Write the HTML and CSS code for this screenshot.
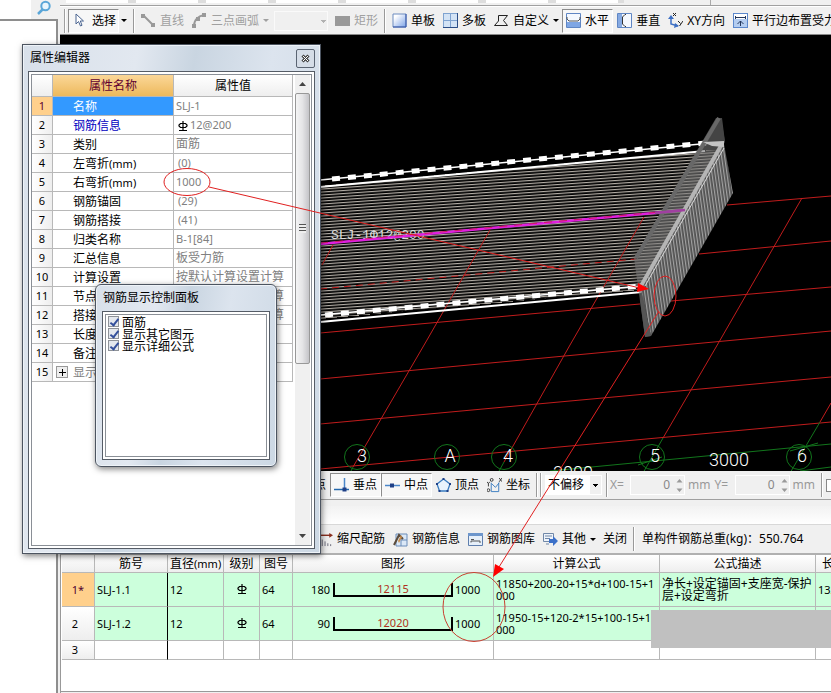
FILE: index.html
```
<!DOCTYPE html>
<html lang="zh-CN">
<head>
    <meta charset="UTF-8">
    <meta name="viewport" content="width=device-width, initial-scale=1.0">
    <title>钢筋编辑</title>
    <link rel="stylesheet" href="styles.css">
</head>
<body>
<!-- Shared symbols -->
<svg class="defs" width="0" height="0">
    <defs>
        <linearGradient id="blueFill" x1="0" y1="0" x2="1" y2="1">
            <stop offset="0.2" stop-color="#ffffff"/>
            <stop offset="1" stop-color="#7ba2e6"/>
        </linearGradient>
        <symbol id="rebar" viewBox="0 0 10 10">
            <path d="M5 0V10M1 9.5H9M2.5 2.5H7.5L9 4V5L7.5 6.500H2.500L1 5V4Z" fill="none" stroke="#000" stroke-width="1.2"/>
        </symbol>
    </defs>
</svg>

<div class="app">
    <aside class="side">
        <div class="side-search">
            <svg width="16" height="16" viewBox="0 0 16 16"><circle cx="9.500" cy="6" r="4.200" fill="#e8f5fd" stroke="#5aa6d8" stroke-width="2"/><path d="M6.500 9.500L2 14" stroke="#5aa6d8" stroke-width="2.500"/></svg>
        </div>
        <div class="side-body"></div>
    </aside>

    <main class="main">
        <div class="strip"><span class="strip-left"></span><span class="strip-right"></span></div>

        <!-- Draw toolbar -->
        <div class="toolbar draw-bar">
            <span class="handle"></span>
            <button class="tool pressed select-tool"><svg width="15" height="15" viewBox="0 0 15 15"><path d="M4 1V11L6.500 8.500L8.500 13L10 12.300L8.300 8H11.500Z" fill="#fff" stroke="#4a6490"/></svg>选择</button>
            <button class="drop" aria-label="选择方式"></button>
            <span class="sep"></span>
            <button class="tool" disabled><svg width="15" height="15" viewBox="0 0 15 15"><path d="M2 2L12 12" stroke="#999" stroke-width="2"/><path d="M0 1H4V5H0ZM10 10H14V14H10Z" fill="#999"/></svg>直线</button>
            <button class="tool" disabled><svg width="15" height="15" viewBox="0 0 15 15"><path d="M2 13C2 7 6 3 12 2" fill="none" stroke="#999" stroke-width="2"/><path d="M0 11H4V15H0ZM10 0H14V4H10ZM4 4H8V8H4Z" fill="#999"/></svg>三点画弧<i class="caret"></i></button>
            <select class="mode-select" aria-label="弧线方式" disabled><option></option></select>
            <button class="tool" disabled><svg width="15" height="15" viewBox="0 0 15 15"><path d="M0 3H15V13H0Z" fill="#999"/></svg>矩形</button>
            <span class="sep"></span>
            <button class="tool"><svg width="15" height="15" viewBox="0 0 15 15"><path d="M1 1H14V14H1Z" fill="url(#blueFill)" stroke="#6c8cc0"/><path d="M14 1V14H1" fill="none" stroke="#3454a8"/></svg>单板</button>
            <button class="tool"><svg width="15" height="15" viewBox="0 0 15 15"><path d="M0 0H15V15H0Z" fill="#7fa3d0"/><path d="M1 1H7V7H1ZM8 1H14V7H8ZM1 8H7V14H1ZM8 8H14V14H8Z" fill="#d3e3f5"/><path d="M14.500 0V14.500H0" fill="none" stroke="#2b4d86"/></svg>多板</button>
            <button class="tool"><svg width="15" height="15" viewBox="0 0 15 15"><path d="M4.500 2.500H13.500L9.500 7.500L13.500 12.500H.5L4.500 8Z" fill="none" stroke="#222"/></svg>自定义<i class="caret"></i></button>
            <button class="tool pressed"><svg width="15" height="15" viewBox="0 0 15 15"><path d="M.5.5H14.500V14.500H.5Z" fill="#f4f8fe" stroke="#5f86c4"/><path d="M1 9H14V14H1Z" fill="#7fa6e4"/><path d="M1 4V6L3 8H12L14 6V4" fill="none" stroke="#555"/></svg>水平</button>
            <button class="tool"><svg width="15" height="15" viewBox="0 0 15 15"><path d="M.5.5H14.500V14.500H.5Z" fill="#f4f8fe" stroke="#5f86c4"/><path d="M1 1H5V14H1Z" fill="#86aae2"/><path d="M9 1.500H8L5.500 4V11L8 13.500H9" fill="none" stroke="#333"/></svg>垂直</button>
            <button class="tool"><svg width="15" height="15" viewBox="0 0 15 15"><path d="M3 4L3 11L10 13" fill="none" stroke="#3c6fc4" stroke-width="1.500"/><path d="M0 6L3 2L6 6ZM7 10L11 13L6 15Z" fill="#3c6fc4"/><path d="M5 0L8 3M8 0L5 3M10 8L12.500 10.500M15 8L11.500 13" stroke="#222"/></svg>XY方向</button>
            <button class="tool"><svg width="15" height="15" viewBox="0 0 15 15"><path d="M0 0H15V15H0Z" fill="#5c88cc"/><path d="M1 1H14V6H1Z" fill="#fff"/><path d="M1 6H14V14H1Z" fill="#b4cdf0"/><path d="M2 4.500H13M2.500 3V6M12.500 3V6M7.500 13V8M4.500 11L7.500 8L10.500 11" fill="none" stroke="#24375c"/></svg>平行边布置受力筋</button>
        </div>

        <!-- Model view -->
        <div class="view">
            <svg class="scene" viewBox="60 35 771 436" preserveAspectRatio="xMidYMid slice">
                <defs>
                    <pattern id="bars" width="8" height="3" patternUnits="userSpaceOnUse" patternTransform="translate(0 1) skewY(-4)">
                        <rect width="8" height="1.200" fill="#b4aea6"/>
                    </pattern>
                    <pattern id="wallBars" width="3" height="8" patternUnits="userSpaceOnUse" patternTransform="skewX(8)">
                        <rect width="3" height="8" fill="#505050"/>
                        <rect width="1.200" height="8" fill="#a2a2a2"/>
                    </pattern>
                </defs>
                <polygon points="320,186 722,149 640,290 320,319" fill="url(#bars)" shape-rendering="crispEdges"/>
                <!-- grid -->
                <g stroke="#c01c1c" fill="none">
                    <path d="M727 205L831 196M699 254L831 241M320 333L640 304M671 301L831 287M320 379L831 331M320 424L831 377M320 469L831 422"/>
                    <path d="M353 467L427 340L490 230M504 462L570 345L644 217M663 438L719 342L802 198M820 422L831 403M322 265L333 245"/>
                    <path d="M320 289L636 259" stroke-dasharray="7 5"/>
                </g>
                <g stroke="#12751c" fill="none">
                    <path d="M550 471L831 444M800 471L831 467M663 438L643 473M820 422L790 473M353 467L350 473M504 462L498 473M638 465L662 457M790 451L818 443"/>
                    <circle cx="357" cy="457" r="12.500"/><circle cx="447" cy="457" r="12.500"/><circle cx="504" cy="457" r="12.500"/><circle cx="652" cy="457" r="12.500"/><circle cx="799" cy="457" r="12.500"/>
                </g>
                <g class="axis-labels">
                    <text x="362" y="462">3</text><text x="450" y="462">A</text><text x="508" y="462">4</text><text x="655" y="462">5</text><text x="802" y="462">6</text><text x="729" y="466">3000</text><text x="573" y="479">3000</text>
                </g>
                <!-- slab edges -->
                <g stroke="#fff" fill="none">
                    <path d="M320 180L722 142M320 315L641 286" stroke-width="1.500"/>
                    <path d="M332 179L706 143M325 315L641 286" stroke-width="5" stroke-dasharray="8 8"/>
                    <path d="M320 187L705 151M320 322L642 292" stroke-width="2"/>
                </g>
                <text class="slab-label" x="331" y="239">SLJ-1Φ12@200</text>
                <path d="M320 244L686 210" stroke="#e020e0" stroke-width="2.500"/>
                <path d="M320 243L660 212" stroke="#d01860" stroke-dasharray="8 7"/>
                <!-- end wall -->
                <polygon points="716,118 722,118 725,142 641,288 651,336 645,337 634,258" fill="#777" fill-opacity="0.600"/>
                <polygon points="721,118 725,142 708,142" fill="#444"/>
                <path d="M719 118L636 258" stroke="#686868" stroke-width="4"/>
                <polygon points="724,144 733,193 651,336 641,290" fill="url(#wallBars)"/>
                <polygon points="641,290 651,336 645,337 640,300" fill="#555"/>
                <path d="M722 144L641 286" stroke="#b5b5b5" stroke-width="4"/>
                <path d="M724 148L645 286" stroke="#d8d8d8"/>
                <path d="M703 142L724 141V147L712 146Z" fill="#c4c4c4"/>
                <path d="M655 213L685 210" stroke="#a040a0" stroke-width="2.500"/>
            </svg>
        </div>

        <!-- Snap toolbar -->
        <div class="toolbar snap-bar">
            <button class="tool snap-cut">点</button>
            <button class="tool pressed"><svg width="15" height="15" viewBox="0 0 15 15"><path d="M10.500 0V11" stroke="#4a86c8" stroke-width="1.500"/><path d="M0 11.500H15" stroke="#2468ac" stroke-width="1.500"/><path d="M8.500 9.500H12.500V13.500H8.500Z" fill="#1e3f86"/></svg>垂点</button>
            <button class="tool pressed"><svg width="15" height="15" viewBox="0 0 15 15"><path d="M0 7.500H15" stroke="#4a86c8" stroke-width="1.500"/><path d="M5 5.500H9V9.500H5Z" fill="#1e3f86"/></svg>中点</button>
            <button class="tool"><svg width="15" height="15" viewBox="0 0 15 15"><path d="M7.500 1L14 6L11.500 13H3.500L1 6Z" fill="#e8f3fc" stroke="#3a7cc0" stroke-width="1.300"/><path d="M6.500 0H8.500V2H6.500ZM0 5H2V7H0ZM13 5H15V7H13ZM2.500 12H4.500V14H2.500ZM10.500 12H12.500V14H10.500Z" fill="#1e3f86"/></svg>顶点</button>
            <button class="tool"><svg width="15" height="15" viewBox="0 0 16 16"><path d="M4.500 5V14.500H12.500V5M5 6L9 10L13 5" fill="none" stroke="#3a7cc0"/><path d="M0 4L1.500 6L3 4M1.500 6V9M13 0L16 4M16 0L13 4" fill="none" stroke="#333"/><circle cx="5" cy="2" r="1.500" fill="none" stroke="#333"/><circle cx="1.500" cy="13" r="1.500" fill="none" stroke="#333"/></svg>坐标</button>
            <span class="sep"></span>
            <span class="handle"></span>
            <select class="offset-select" aria-label="偏移方式"><option>不偏移</option></select>
            <span class="sep"></span>
            <label class="off-label" for="offX">X=</label>
            <span class="spin"><input id="offX" type="text" value="0" disabled><svg width="7" height="15" viewBox="0 0 7 15"><path d="M3.500 1L6.500 4.500H.5ZM3.500 14L6.500 10.500H.5Z" fill="#999"/></svg></span>
            <span class="off-unit">mm</span>
            <label class="off-label" for="offY">Y=</label>
            <span class="spin"><input id="offY" type="text" value="0" disabled><svg width="7" height="15" viewBox="0 0 7 15"><path d="M3.500 1L6.500 4.500H.5ZM3.500 14L6.500 10.500H.5Z" fill="#999"/></svg></span>
            <span class="off-unit">mm</span>
            <span class="sep"></span>
            <input class="rot-check" type="checkbox" aria-label="旋转" disabled>
        </div>

        <div class="splitter"></div>

        <!-- Rebar toolbar -->
        <div class="toolbar rebar-bar">
            <button class="tool"><svg width="15" height="15" viewBox="0 0 16 16"><path d="M0 3.500H13" stroke="#8a3020" stroke-width="1.500"/><path d="M12 1L16 3.500L12 6Z" fill="#8a3020"/><path d="M1.500 7V15M4.500 8V15M7.500 10V15M10.500 12V15M13.500 13V15" stroke="#667"/></svg>缩尺配筋</button>
            <button class="tool"><svg width="15" height="15" viewBox="0 0 15 15"><path d="M3 2H14V14H3Z" fill="#dbe8f7" stroke="#6a8cb8"/><path d="M8 8H14M8 5V14" stroke="#6a8cb8"/><path d="M1 13L6 3L10 7" fill="none" stroke="#5a4a3a" stroke-width="2"/><path d="M5 9L8 3L9 5L6 11Z" fill="#c88d4d"/></svg>钢筋信息</button>
            <button class="tool"><svg width="15" height="15" viewBox="0 0 15 15"><path d="M.5 1.500H14.500V13.500H.5Z" fill="#e7f0fa" stroke="#5f7fae"/><path d="M0 1H15V4H0Z" fill="#6d96cc"/><path d="M3 7.500H6M3 10.500V9H12V11" fill="none" stroke="#555"/></svg>钢筋图库</button>
            <button class="tool"><svg width="15" height="15" viewBox="0 0 15 15"><path d="M.5 1.500H10.500V9.500H.5Z" fill="#eef3fa" stroke="#7088a8"/><path d="M2 4H9M2 6.500H7M3 12H6" stroke="#7088a8"/><path d="M6 7H10V4L15 9L10 14V11H6Z" fill="#3c70c8"/></svg>其他<i class="caret"></i></button>
            <button class="tool">关闭</button>
            <span class="sep"></span>
            <span class="total">单构件钢筋总重(kg)：550.764</span>
        </div>

        <!-- Rebar table -->
        <div class="rebar-grid">
            <table class="rebar-table">
                <colgroup><col class="c-no"><col class="c-name"><col class="c-dia"><col class="c-lvl"><col class="c-fig"><col class="c-shape"><col class="c-calc"><col class="c-desc"><col></colgroup>
                <thead>
                    <tr><th></th><th>筋号</th><th>直径<small>(mm)</small></th><th>级别</th><th>图号</th><th>图形</th><th>计算公式</th><th>公式描述</th><th class="cut">长</th></tr>
                </thead>
                <tbody>
                    <tr class="filled">
                        <th class="current">1*</th><td>SLJ-1.1</td><td>12</td><td class="mid"><svg width="10" height="10"><use href="#rebar"/></svg></td><td>64</td>
                        <td><div class="shape"><span class="hook">180</span><span class="bar">12115</span><span>1000</span></div></td>
                        <td>11850+200-20+15*d+100-15+1<br>000</td><td class="desc">净长+设定锚固+支座宽-保护<br>层+设定弯折</td><td>132</td>
                    </tr>
                    <tr class="filled">
                        <th>2</th><td>SLJ-1.2</td><td>12</td><td class="mid"><svg width="10" height="10"><use href="#rebar"/></svg></td><td>64</td>
                        <td><div class="shape"><span class="hook">90</span><span class="bar">12020</span><span>1000</span></div></td>
                        <td>11950-15+120-2*15+100-15+1<br>000</td><td></td><td></td>
                    </tr>
                    <tr class="empty"><th>3</th><td></td><td></td><td></td><td></td><td></td><td></td><td></td><td></td></tr>
                </tbody>
            </table>
            <div class="mask"></div>
            <div class="grid-foot"></div>
        </div>
    </main>
</div>

<!-- Property editor -->
<section class="window prop-window">
    <header class="window-title">属性编辑器<button class="close" aria-label="关闭"><svg width="9" height="9" viewBox="0 0 9 9"><path d="M1.500 1.500L7.500 7.500M7.500 1.500L1.500 7.500" stroke="#444" stroke-width="3"/><path d="M2 2L7 7M7 2L2 7" stroke="#fff"/></svg></button></header>
    <div class="window-body prop-body">
        <table class="prop-table">
            <colgroup><col class="p-no"><col class="p-name"><col class="p-val"></colgroup>
            <thead><tr><th></th><th class="name-head">属性名称</th><th>属性值</th></tr></thead>
            <tbody>
                <tr class="selected"><th>1</th><td>名称</td><td>SLJ-1</td></tr>
                <tr class="link"><th>2</th><td>钢筋信息</td><td class="steel"><svg width="10" height="10"><use href="#rebar"/></svg>12@200</td></tr>
                <tr><th>3</th><td>类别</td><td class="zh">面筋</td></tr>
                <tr><th>4</th><td>左弯折<small>(mm)</small></td><td class="paren">(0)</td></tr>
                <tr><th>5</th><td>右弯折<small>(mm)</small></td><td>1000</td></tr>
                <tr><th>6</th><td>钢筋锚固</td><td class="paren">(29)</td></tr>
                <tr><th>7</th><td>钢筋搭接</td><td class="paren">(41)</td></tr>
                <tr><th>8</th><td>归类名称</td><td>B-1[84]</td></tr>
                <tr><th>9</th><td>汇总信息</td><td class="zh">板受力筋</td></tr>
                <tr><th>10</th><td>计算设置</td><td class="zh">按默认计算设置计算</td></tr>
                <tr><th>11</th><td>节点设置</td><td class="zh">按默认节点设置计算</td></tr>
                <tr><th>12</th><td>搭接设置</td><td class="zh">按默认搭接设置计算</td></tr>
                <tr><th>13</th><td>长度调整</td><td></td></tr>
                <tr><th>14</th><td>备注</td><td></td></tr>
                <tr class="group"><th>15</th><td><button class="expand" aria-label="展开"></button>显示样式</td><td></td></tr>
            </tbody>
        </table>
        <div class="scroll">
            <svg width="15" height="18" viewBox="0 0 15 18"><path d="M7.500 7L11 11H4Z" fill="#444"/></svg>
            <div class="thumb"><i></i></div>
            <div class="track"></div>
            <svg width="15" height="18" viewBox="0 0 15 18"><path d="M7.500 11L11 7H4Z" fill="#444"/></svg>
        </div>
    </div>
</section>

<!-- Rebar display panel -->
<section class="window panel-window">
    <header class="window-title">钢筋显示控制面板</header>
    <div class="window-body panel-body">
        <label><input type="checkbox" checked>面筋</label>
        <label><input type="checkbox" checked>显示其它图元</label>
        <label><input type="checkbox" checked>显示详细公式</label>
    </div>
</section>

<!-- Callouts drawn over everything -->
<svg class="callouts" width="831" height="693" viewBox="0 0 831 693">
    <g fill="none" stroke="#e02020">
        <ellipse cx="187" cy="182" rx="23" ry="13.500"/>
        <path d="M209 187L640 288"/>
        <ellipse cx="665" cy="296" rx="11" ry="20"/>
        <path d="M659 311L499 567"/>
        <ellipse cx="474" cy="607" rx="31" ry="34.500" stroke="#c84030"/>
    </g>
    <path d="M649 289L637 292L638 283Z" fill="#f00"/>
    <path d="M493 577L495 564L504 569Z" fill="#f00"/>
</svg>
</body>
</html>
```
FILE: styles.css
```
* { box-sizing: border-box; }
body {
    margin: 0;
    position: relative;
    overflow: hidden;
    background: #f0f0f0;
    color: #000;
    font: 12px/16px "Noto Sans", "Noto Sans CJK SC", sans-serif;
}
button, input, select { font: inherit; color: inherit; margin: 0; padding: 0; }
svg { flex: none; }
small { font-size: 11px; }
.defs { position: absolute; }

.app { display: flex; height: 100vh; }

/* left strip */
.side { flex: none; width: 60px; display: flex; flex-direction: column; background: #f0f0f0; }
.side-search { height: 19px; padding-left: 36px; background: linear-gradient(90deg, #fff 31px, #f0f0f0 31px); }
.side-body { flex: 1; width: 58px; border-top: 2px solid #8e8e8e; border-right: 2px solid #8e8e8e; background: #fff; }

.main { flex: 1; min-width: 0; display: flex; flex-direction: column; }
.strip { display: flex; justify-content: space-between; height: 6px; border-bottom: 1px solid #a0a0a0; padding: 0 118px 0 6px; }
.strip-left { width: 558px; height: 3px; background: repeating-linear-gradient(90deg, #fff 0 62px, #ddd 62px 70px); }
.strip-right { width: 3px; border-left: 1px solid #aaa; }

/* toolbars */
.toolbar { display: flex; align-items: center; overflow: hidden; white-space: nowrap; background: #f0f0f0; }
.draw-bar { height: 29px; padding: 0 4px; border-top: 1px solid #fff; border-bottom: 1px solid #888; }
.snap-bar { height: 29px; padding-left: 250px; border-bottom: 1px solid #a0a0a0; }
.rebar-bar { height: 28px; padding-left: 254px; }
.handle { flex: none; width: 2px; height: 24px; margin-right: 2px; border-left: 1px solid #a0a0a0; border-right: 1px solid #fff; }
.sep { flex: none; width: 2px; height: 24px; margin: 0 2px; border-left: 1px solid #999; border-right: 1px solid #fff; }
.tool {
    flex: none;
    display: flex;
    align-items: center;
    gap: 4px;
    height: 24px;
    padding: 0 4px;
    border: 0;
    background: none;
}
.tool:disabled { color: #a0a0a0; }
.pressed {
    border: 1px solid #fff;
    border-top-color: #8c8c8c;
    border-left-color: #8c8c8c;
    padding: 0 3px;
    background: #f7f7f7;
}
.select-tool { gap: 5px; padding-right: 2px; }
.drop { flex: none; width: 12px; height: 24px; border: 0; background: none; }
.drop::before, .caret { content: ""; display: block; border: 3px solid transparent; border-top-color: currentColor; border-bottom: 0; }
.drop::before { width: 0; margin-left: 2px; }
.mode-select {
    appearance: none;
    flex: none;
    width: 54px;
    height: 20px;
    margin: 0 3px 0 2px;
    border: 1px solid #fff;
    border-radius: 0;
    background: linear-gradient(#999, #999) 46px 8px / 5px 1px no-repeat, linear-gradient(#999, #999) 47px 9px / 3px 1px no-repeat, linear-gradient(#999, #999) 48px 10px / 1px 1px no-repeat #f0f0f0;
}
.caret { margin-right: -1px; }

/* model view */
.view { flex: 1; min-height: 0; background: #000; }
.scene { display: block; width: 100%; height: 100%; }
.axis-labels { fill: #fff; font: 300 18px Roboto, "Open Sans", sans-serif; text-anchor: middle; }
.slab-label { fill: #ddd; font: 13px "Liberation Mono", monospace; }

/* snap bar */
.snap-cut { width: 20px; }
.offset-select {
    appearance: none;
    flex: none;
    width: 57px;
    height: 20px;
    margin: 0 2px 0 1px;
    padding-left: 2px;
    border: 1px solid #fff;
    border-radius: 0;
    background: linear-gradient(#000, #000) 47px 8px / 5px 1px no-repeat, linear-gradient(#000, #000) 48px 9px / 3px 1px no-repeat, linear-gradient(#000, #000) 49px 10px / 1px 1px no-repeat, linear-gradient(90deg, #fff 44px, #f0f0f0 44px);
}
.off-label { width: 20px; color: #999; flex: none; }
.spin { flex: none; display: flex; align-items: center; width: 55px; height: 20px; border: 1px solid #fff; }
.spin input { width: 39px; margin-right: 6px; border: 0; background: none; text-align: right; color: #888; }
.off-unit { flex: none; padding: 0 4px 0 3px; color: #999; }
.rot-check { appearance: none; flex: none; width: 13px; height: 13px; margin-left: 1px; border: 1px solid #888; background: #fff; }
.splitter { height: 25px; border-top: 6px solid #f0f0f0; border-bottom: 1px solid #d8d8d8; background: linear-gradient(#f2f2f2, #fff); }
.total { margin-left: 5px; }

/* rebar table */
.rebar-grid { position: relative; height: 140px; padding-left: 1px; overflow: hidden; background: #fff; border-top: 2px solid #b0b0b0; border-left: 1px solid #999; }
.rebar-table { width: 100%; min-width: 770px; table-layout: fixed; border-collapse: separate; border-spacing: 0; font-size: 11px; line-height: 12px; }
.c-no { width: 33px; }
.c-name { width: 73px; }
.c-dia { width: 56px; }
.c-lvl { width: 36px; }
.c-fig { width: 33px; }
.c-shape { width: 201px; }
.c-calc { width: 166px; }
.c-desc { width: 156px; }
.rebar-table th, .rebar-table td { padding: 0 2px; overflow: hidden; white-space: nowrap; border-right: 1px solid #b8b8b8; border-bottom: 1px solid #b8b8b8; }
.rebar-table th { font-weight: normal; background: linear-gradient(#fff, #eee); text-align: center; }
.rebar-table thead th { height: 18px; font-size: 12px; }
.rebar-table thead .cut { text-align: left; padding-left: 6px; }
.rebar-table tbody tr { height: 34px; }
.rebar-table tbody .empty { height: 19px; }
.rebar-table tbody th { padding-right: 8px; }
.rebar-table tbody td:nth-child(2) { border-right-color: #000; }
.rebar-table .current { padding-right: 2px; background: #ffd08c; color: #500030; }
.rebar-table .mid { text-align: center; }
.rebar-table .desc { font-size: 12px; }
.filled td { background: #ccffdc; }
.shape { display: flex; align-items: center; }
.hook { width: 35px; text-align: right; }
.bar { width: 120px; height: 14px; margin: 0 2px 0 3px; border: 2px solid #000; border-top: 0; text-align: center; color: #b03020; }
.mask { position: absolute; left: 590px; right: 0; top: 55px; height: 38px; background: #c0c0c0; }
.grid-foot { position: absolute; left: 0; right: 0; bottom: 0; height: 2px; border-top: 1px solid #999; background: #f0f0f0; }

/* floating windows */
.window {
    position: absolute;
    display: flex;
    flex-direction: column;
    border: 1px solid #4c5460;
    background: linear-gradient(100deg, #d8e0ea 0, #e2e8f0 30%, #c9d5e1 45%, #dce4ee 65%, #ccd8e4 100%);
    box-shadow: inset 0 0 0 1px #eef3f8, 1px 2px 6px rgba(0, 0, 0, 0.5);
}
.window-title { display: flex; align-items: center; justify-content: space-between; flex: none; height: 26px; padding: 0 5px 0 7px; }
.window-body { flex: 1; min-height: 0; background: #fff; border: 1px solid #555c66; box-shadow: inset 0 0 0 2px #fff, inset 0 0 0 3px #8a8f96; }
.close { display: grid; place-items: center; width: 19px; height: 19px; border: 1px solid #5a6472; border-radius: 2px; background: #d5dde7; }

.prop-window { left: 22px; top: 44px; width: 299px; height: 510px; }
.prop-body { display: flex; justify-content: space-between; margin: 0 5px 4px; padding: 3px 4px 3px 3px; }
.prop-table { align-self: flex-start; table-layout: fixed; width: 261px; border-collapse: separate; border-spacing: 0; font-size: 12px; line-height: 14px; }
.p-no { width: 21px; }
.p-name { width: 121px; }
.prop-table th, .prop-table td { height: 19px; padding: 2px 0 0; overflow: hidden; white-space: nowrap; border-right: 1px solid #b8b8b8; border-bottom: 1px solid #b8b8b8; }
.prop-table th { padding-top: 0; font-weight: normal; background: linear-gradient(90deg, #fff, #eee); }
.prop-table tbody th { font-size: 11px; }
.prop-table thead th { height: 22px; background: linear-gradient(#fff, #eee); }
.prop-table thead .name-head { background: linear-gradient(#fbd798, #edb95c); color: #600030; }
.prop-table td:nth-child(2) { position: relative; padding-left: 20px; }
.prop-table td:nth-child(3) { padding: 0 0 0 2px; color: #808080; font-size: 11px; }
.prop-table td.zh { font-size: 12px; }
.prop-table td.paren { padding-left: 4px; }
.steel svg { margin: 0 2px -2px; }
.prop-table .selected th { background: #ffd08c; color: #600030; }
.selected td:nth-child(2) { background: #3399ff; color: #fff; }
.link td:nth-child(2) { color: #0000c0; }
.group td { color: #808080; }
.expand {
    position: absolute;
    left: 3px;
    top: 3px;
    width: 12px;
    height: 12px;
    border: 1px solid #999;
    background: linear-gradient(#000, #000) 2px 5px / 7px 1px no-repeat, linear-gradient(#000, #000) 5px 2px / 1px 7px no-repeat, #eee;
}
.scroll { display: flex; flex-direction: column; width: 15px; background: #f0f0f0; }
.thumb { height: 271px; display: grid; place-items: center; border: 1px solid #989898; border-radius: 2px; background: linear-gradient(90deg, #f5f5f5, #e4e4e6 50%, #c4c4c8); }
.thumb i { width: 7px; height: 9px; background: repeating-linear-gradient(#555 0 1px, #eee 1px 3px); }
.track { flex: 1; }

.panel-window { left: 95px; top: 284px; width: 182px; height: 183px; border-radius: 6px; }
.panel-body { margin: 0 6px 6px; padding: 4px 5px; }
.panel-body label { display: flex; align-items: flex-start; gap: 3px; height: 12px; line-height: 14px; }
.panel-body input { appearance: none; width: 11px; height: 11px; border: 1px solid #8e9298; background: #e4e8ee; }
.panel-body input:checked::after { content: ""; display: block; width: 3px; height: 7px; margin: 0 0 0 3px; border: solid #34509c; border-width: 0 2px 2px 0; transform: rotate(38deg); }

.callouts { position: absolute; left: 0; top: 0; pointer-events: none; }
```
